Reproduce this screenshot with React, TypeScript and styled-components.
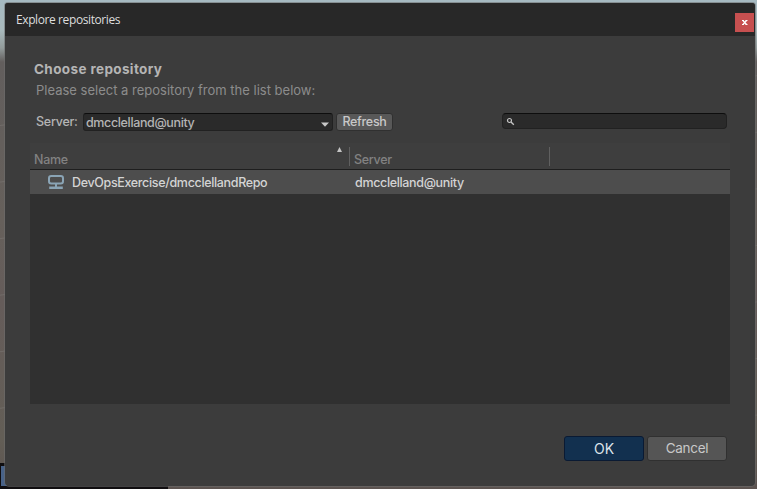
import React from "react";
import styled, { createGlobalStyle } from "styled-components";

const GlobalStyle = createGlobalStyle`
  * { box-sizing: border-box; }
  body { margin: 0; overflow: hidden; }
`;

const Desktop = styled.div`
  width: 757px;
  height: 489px;
  padding: 3px 2px 3px 5px;
  font-family: Inter, sans-serif;
  background:
    linear-gradient(#486288, #486288) 1px 466px / 6px 20px no-repeat,
    linear-gradient(#100e10, #100e10) 0 463px / 168px 26px no-repeat,
    repeating-linear-gradient(172deg, transparent 0 54px, #7b777488 55px, transparent 56px) 0 70px / 757px 393px no-repeat,
    linear-gradient(#a6bac2 0, #a9babd 30px, #929b9b 48px, #625e5d 62px, #66605b 220px, #655c5a 300px, #635e56 440px, #5c5350 489px);
`;

const Window = styled.main`
  height: 483px;
  display: flex;
  flex-direction: column;
  overflow: hidden;
  border-radius: 3px 3px 4px 4px;
  background: #3c3c3c;
  box-shadow: 0 0 0 1px rgba(110, 110, 110, 0.55);
`;

const TitleBar = styled.header`
  height: 33px;
  flex: none;
  display: flex;
  justify-content: space-between;
  padding: 10px 1px 0 11px;
  background: #282828;
`;

const Title = styled.h1`
  margin: -1px 0 0;
  font: 400 12px/16px "Open Sans", sans-serif;
  letter-spacing: -0.4px;
  color: #dedede;
`;

const CloseButton = styled.button`
  width: 19px;
  height: 19px;
  padding: 0;
  display: grid;
  place-items: center;
  border: 0;
  background: #c75050;
`;

const Content = styled.section`
  padding: 24px 25px 0;
`;

const Heading = styled.h2`
  margin: 0 0 0 4px;
  font-size: 13.5px;
  font-weight: 700;
  line-height: 18px;
  letter-spacing: 0.38px;
  color: #b5b5b5;
`;

const Description = styled.p`
  margin: 3px 0 0 6px;
  font-size: 13px;
  line-height: 18px;
  color: #8c8c8c;
`;

const Toolbar = styled.div`
  display: flex;
  height: 18px;
  margin-top: 14px;
  padding: 0 3px 0 6px;
`;

const ServerLabel = styled.label`
  width: 47px;
  font-size: 12.5px;
  font-weight: 450;
  line-height: 18px;
  letter-spacing: -0.25px;
  color: #b5b5b5;
`;

const Dropdown = styled.div`
  width: 250px;
  height: 18px;
  display: flex;
  justify-content: space-between;
  padding: 1px 3px 0 2px;
  border: 1px solid #212121;
  border-top-color: #0d0d0d;
  border-radius: 3px;
  background: #2a2a2a;
  font-size: 12.5px;
  font-weight: 450;
  line-height: 16px;
  letter-spacing: -0.36px;
  color: #b4b4b4;
`;

const Arrow = styled.svg`
  display: block;
  margin-top: 7px;
`;

const Button = styled.button<{ $primary?: boolean; $small?: boolean }>`
  width: ${(p) => (p.$small ? 57 : 80)}px;
  height: ${(p) => (p.$small ? 18 : 25)}px;
  flex: none;
  padding: 0;
  border: 1px solid ${(p) => (p.$primary ? "#0a1a33" : "#303030")};
  border-radius: 3px;
  background: ${(p) => (p.$primary ? "#12304f" : p.$small ? "#585858" : "#555555")};
  color: ${(p) => (p.$primary ? "#dce3ea" : "#c8c8c8")};
  font-family: Inter, sans-serif;
  font-size: ${(p) => (p.$small ? 12.5 : p.$primary ? 14 : 13.5)}px;
  font-weight: ${(p) => (p.$small ? 450 : 400)};
  line-height: ${(p) => (p.$small ? 16 : 23)}px;
  letter-spacing: ${(p) => (p.$primary ? 0 : -0.3)}px;
`;

const Refresh = styled(Button)`
  margin-left: 3px;
`;

const Search = styled.div`
  width: 225px;
  height: 16px;
  margin-left: auto;
  padding: 3px 0 0 3px;
  border: 1px solid #212121;
  border-top-color: #0d0d0d;
  border-radius: 4px;
  background: #2a2a2a;
`;

const SearchIcon = styled.svg`
  display: block;
`;

const Table = styled.div`
  height: 261px;
  margin-top: 12px;
  background: #303030;
`;

const TableHead = styled.div`
  height: 27px;
  display: grid;
  grid-template-columns: 320px 200px 1fr;
  padding-top: 4px;
  border-bottom: 1px solid #1e1e1e;
  background: #3e3e3e;
`;

const Column = styled.div<{ $divider?: boolean }>`
  height: 19px;
  display: flex;
  justify-content: space-between;
  padding: 4px 7px 0 4px;
  border-right: ${(p) => (p.$divider ? "1px solid #606060" : "0")};
  font-size: 12.5px;
  font-weight: 450;
  line-height: 18px;
  letter-spacing: -0.3px;
  color: #828282;
`;

const SortMark = styled.svg`
  display: block;
  margin-top: -4px;
`;

const Row = styled.div`
  height: 24px;
  display: grid;
  grid-template-columns: 18px 24px 283px 1fr;
  background: #4d4d4d;
  font-size: 12.5px;
  font-weight: 450;
  line-height: 25px;
  letter-spacing: -0.34px;
  color: #d4d4d4;
`;

const RepoIcon = styled.svg`
  margin-top: 5px;
`;

const Footer = styled.footer`
  display: flex;
  justify-content: flex-end;
  gap: 3px;
  padding: 32px 3px 0 0;
`;

export default function App() {
  return (
    <Desktop>
      <GlobalStyle />
      <Window>
        <TitleBar>
          <Title>Explore repositories</Title>
          <CloseButton aria-label="Close">
            <svg width="7" height="7" viewBox="0 0 7 7" fill="none" stroke="#fff">
              <path d="M1 1.5h2M4.5 1.5h2M1 5.5h2M4.5 5.5h2" />
              <path d="M2 1.5L5.5 5.5M5.5 1.5L2 5.5" strokeWidth="1.3" />
            </svg>
          </CloseButton>
        </TitleBar>
        <Content>
          <Heading>Choose repository</Heading>
          <Description>Please select a repository from the list below:</Description>
          <Toolbar>
            <ServerLabel>Server:</ServerLabel>
            <Dropdown>
              <span>dmcclelland@unity</span>
              <Arrow width="8" height="5" viewBox="0 0 8 5">
                <path d="M0 0.5h8L4 4.7z" fill="#c8c8c8" />
              </Arrow>
            </Dropdown>
            <Refresh $small>Refresh</Refresh>
            <Search>
              <SearchIcon width="9" height="9" viewBox="0 0 9 9" fill="none" stroke="#c4c4c4">
                <circle cx="3.5" cy="3.5" r="2" strokeWidth="1.2" />
                <path d="M5 5L7.8 7.7" strokeWidth="1.4" />
              </SearchIcon>
            </Search>
          </Toolbar>
          <Table>
            <TableHead>
              <Column $divider>
                <span>Name</span>
                <SortMark width="5" height="5" viewBox="0 0 5 5">
                  <path d="M2.5 0L5 5H0z" fill="#c4c4c4" />
                </SortMark>
              </Column>
              <Column $divider>Server</Column>
              <Column />
            </TableHead>
            <Row>
              <span />
              <RepoIcon width="16" height="14" viewBox="0 0 16 14" fill="none" stroke="#8aa4b5">
                <rect x="1" y="1" width="14" height="7.5" rx="2.2" strokeWidth="2" />
                <path d="M8 9v3" strokeWidth="2" />
                <path d="M1.2 12.7h13.6" strokeWidth="2.6" />
              </RepoIcon>
              <span>DevOpsExercise/dmcclellandRepo</span>
              <span>dmcclelland@unity</span>
            </Row>
          </Table>
          <Footer>
            <Button $primary>OK</Button>
            <Button>Cancel</Button>
          </Footer>
        </Content>
      </Window>
    </Desktop>
  );
}
